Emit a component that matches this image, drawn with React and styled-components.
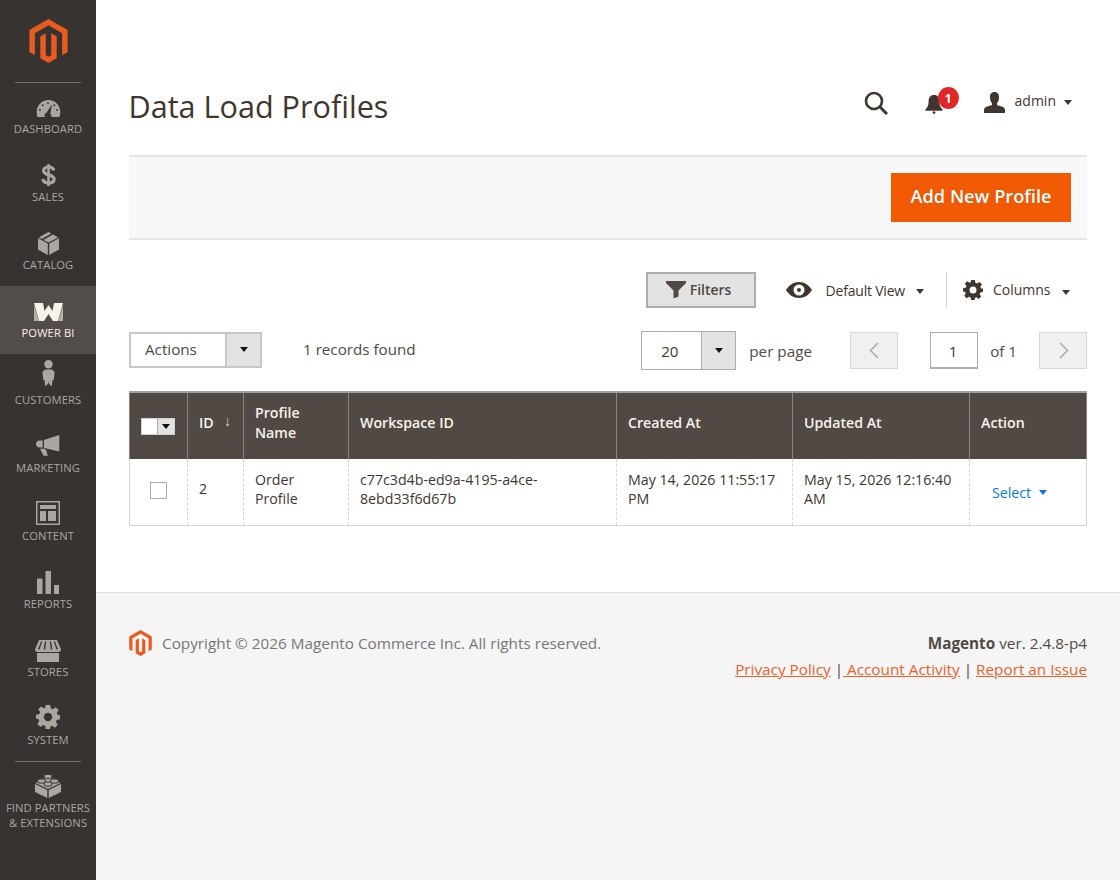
import React from "react";
import styled, { createGlobalStyle } from "styled-components";

const Global = createGlobalStyle`
  html, body { margin: 0; padding: 0; background: #fff; }
  body { font-family: "Open Sans", "Noto Sans", sans-serif; color: #41362f; }
  * { box-sizing: border-box; }
`;

const Shell = styled.div`display: flex; width: 1120px; height: 880px; overflow: hidden;`;
const Sidebar = styled.nav`width: 96px; flex: none; background: #373330; display: flex; flex-direction: column; align-items: stretch;`;
const LogoBox = styled.div`height: 83px; margin: 0 15px; padding-top: 19px; border-bottom: 1px solid #736e6a; display: flex; justify-content: center; align-items: flex-start;`;
const MenuList = styled.div`display: flex; flex-direction: column; margin-top: -0.6px;`;
const MenuItem = styled.a`
  height: 67.9px; flex: none; display: flex; flex-direction: column; align-items: center; justify-content: flex-end; padding-bottom: 14.4px;
  font-size: 11.2px; line-height: 15px; letter-spacing: 0.1px; text-transform: uppercase; text-align: center;
  color: ${p => p.$active ? "#f7f3eb" : "#aaa6a0"};
  background: ${p => p.$active ? "#524d49" : "transparent"};
`;
const IconSlot = styled.div`
  height: 28px; flex: none; display: flex; align-items: flex-end; justify-content: center;
  margin-bottom: ${p => 2 + (p.$lift || 0)}px; color: ${p => p.$active ? "#f7f3eb" : "#aaa6a0"};
`;
const PartnerItem = styled(MenuItem)`
  height: 110px; margin: 0 15px; border-top: 1px solid #736e6a; justify-content: flex-start; padding: 7.5px 0 0;
  white-space: nowrap;
`;
const Body = styled.div`flex: 1; display: flex; flex-direction: column; min-width: 0;`;
const Content = styled.main`padding: 0 33px; height: 592px; flex: none;`;
const Header = styled.header`height: 155px; padding-top: 85px; display: flex; justify-content: space-between; align-items: flex-start;`;
const Title = styled.h1`margin: -1px 0 0 -0.5px; font-size: 30.6px; line-height: 44px; font-weight: 400; color: #41362f;`;
const HeaderActions = styled.div`display: flex; align-items: center; height: 34px; margin-right: 15px;`;
const SearchWrap = styled.div`display: flex; margin-right: 37px; margin-top: 2px;`;
const BellWrap = styled.div`position: relative; display: flex; margin-right: 41px; margin-top: 4px;`;
const Badge = styled.span`
  position: absolute; top: -7px; left: 13px; width: 21px; height: 22px; border-radius: 50%; background: #e22626; color: #fff;
  font-size: 12px; font-weight: 700; display: flex; align-items: center; justify-content: center;
`;
const UserName = styled.span`font-size: 14px; color: #41362f; margin: -4px 8px 0 10px;`;
const Caret = styled.span`
  display: inline-block; width: 0; height: 0; border-left: 4.5px solid transparent; border-right: 4.5px solid transparent;
  border-top: 5px solid ${p => p.$color || "#41362f"};
  margin-top: ${p => p.$drop || 0}px;
`;
const ActionBar = styled.section`height: 85px; background: #f8f8f8; border-top: 2px solid #e6e6e6; border-bottom: 2px solid #e6e6e6; display: flex; justify-content: flex-end; align-items: center; padding-right: 16px;`;
const PrimaryButton = styled.button`
  width: 180px; height: 49px; border: 0; padding: 0 0 3px; background: #f15a03; color: #fff; font: 600 18.2px "Open Sans", sans-serif; text-shadow: 0 0 1px rgba(0,0,0,.25);
`;
const ToolRow = styled.div`height: 36px; margin-top: 32px; display: flex; justify-content: flex-end; align-items: center;`;
const FilterButton = styled.button`
  width: 110px; height: 36px; background: #e3e3e3; border: 2px solid #adadad; color: #514943; font: 600 14px "Open Sans", sans-serif;
  display: flex; align-items: center; justify-content: center; gap: 4px; padding: 0 4px 2px 0;
`;
const ViewSwitch = styled.div`display: flex; align-items: center; font-size: 14px; letter-spacing: -0.2px; color: #41362f; margin-left: 30px; padding-right: 22px;`;
const ViewLabel = styled.span`margin: 0 11px 0 14px;`;
const ColumnSwitch = styled.div`
  display: flex; align-items: center; font-size: 14px; color: #41362f; border-left: 1px solid #d6d6d6; height: 36px; padding-left: 16px; width: 141px;
`;
const ColumnLabel = styled.span`margin: -1px 12px 0 10px; letter-spacing: -0.02px;`;
const PagerRow = styled.div`height: 39px; margin-top: 23px; display: flex; align-items: center; justify-content: space-between; font-size: 15.2px;`;
const Group = styled.div`display: flex; align-items: center;`;
const ActionsSelect = styled.div`
  width: 133px; height: 36px; margin-top: -2px; border: 2px solid #c7c7c7; display: flex; background: #fff; color: #514943;
`;
const SelectText = styled.span`flex: 1; padding-left: 14px; line-height: 31px; font-size: 15.2px;`;
const SelectArrow = styled.span`width: 35px; background: #e3e3e3; border-left: 2px solid #c7c7c7; display: flex; align-items: center; justify-content: center;`;
const Found = styled.span`margin: -4px 0 0 41px; color: #514943;`;
const PageSelect = styled.div`width: 95px; height: 39px; border: 1px solid #adadad; display: flex; background: #fff;`;
const PageValue = styled.span`width: 59px; line-height: 39px; padding-left: 19px; font-size: 15.2px; color: #41362f;`;
const PageArrow = styled.span`flex: 1; background: #e3e3e3; border-left: 1px solid #adadad; display: flex; align-items: center; justify-content: center;`;
const PerPage = styled.span`margin: 0 38px 0 13px; color: #514943; font-size: 15.3px;`;
const PagerButton = styled.span`
  width: 48px; height: 37px; background: #f0f0f0; border: 1px solid #d8d8d8; display: flex; align-items: center; justify-content: center; color: #aaa;
`;
const PageInput = styled.span`
  width: 48px; height: 37px; margin-left: 32px; padding-right: 2px; border: 1px solid #adadad; border-width: 1px 1px 2px 1px; background: #fff; text-align: center; line-height: 37px; color: #41362f;
`;
const OfLabel = styled.span`margin: 0 22px 0 12px; color: #514943;`;
const Grid = styled.table`
  width: 957px; margin-top: 21px; border-collapse: collapse; table-layout: fixed; font-size: 14.2px;
`;
const Th = styled.th`
  height: 67px; background: #514943; color: #f7f3eb; text-align: left; font-weight: 600; line-height: 20px; padding: 0 11px 6px;
  border: 1px solid #8a837f; border-top: 2px solid #a5a09b; border-bottom: 0; position: relative;
`;
const Td = styled.td`
  height: 66px; padding: 0 11px; color: #41362f; line-height: 19px; border: 1px dashed #d6d6d6; border-bottom: 1px solid #d6d6d6; border-top: 0;
  &:first-child { border-left: 1px solid #d6d6d6; }
  &:last-child { border-right: 1px solid #d6d6d6; }
`;
const SortMark = styled.span`position: absolute; top: 18px; left: 36px; font-size: 14px; font-weight: 400; color: #d8d4cf;`;
const MassSelect = styled.div`width: 34px; height: 17px; display: flex; margin: 6px 0 0; border: 1px solid #d0d0d0; background: #fff;`;
const MassBox = styled.span`flex: 1; background: #fff;`;
const MassArrow = styled.span`width: 17px; background: #e3e3e3; border-left: 1px solid #aaa; display: flex; align-items: center; justify-content: center;`;
const Check = styled.div`width: 17px; height: 17px; border: 1px solid #adadad; background: #fff; margin: -3px 0 0 9px;`;
const CellWithOffset = styled.div`margin-top: ${p => p.$up || -5}px;`;
const SelectLink = styled.a`color: #007bdb; display: flex; align-items: center; gap: 8px; padding-left: 11px; margin-top: 2px;`;
const Footer = styled.footer`flex: 1; background: #f5f5f5; border-top: 1px solid #e3e3e3; padding: 37px 33px 0; display: flex; justify-content: space-between; align-items: flex-start; font-size: 15.3px; color: #777;`;
const Copy = styled.div`display: flex; align-items: center; gap: 10px; line-height: 26px;`;
const Legal = styled.div`text-align: right; line-height: 26px;`;
const Version = styled.div`color: #514943; strong { font-weight: 700; color: #514943; }`;
const FootLinks = styled.div`color: #514943;`;
const FootLink = styled.a`color: #e9622a; text-decoration: underline;`;

const MagentoLogo = ({ w, h }) => (
  <svg width={w} height={h} viewBox="0 0 43.400 50" fill="#eb5a1f">
    <path d="M21.700 0 43.400 12.500V37.500L37.200 41.100V16.100L21.700 7.200 6.200 16.100V41.100L0 37.500V12.500Z" />
    <path d="M21.700 50 12.400 44.600V19.700L18.600 16.100V41L21.700 42.900 24.800 41V16.100L31 19.700V44.600Z" />
  </svg>
);

const Gauge = () => (
  <svg width="25" height="19" viewBox="0 0 26 20" fill="currentColor">
    <path fillRule="evenodd" d="M13 1C6 1 .6 6.500.6 13.500c0 2.200.3 4 .9 5.500h7.700c-.4-.7-.5-1.400-.4-2.100.3-1.300 1.200-2.200 2.300-2.600L16.700 5.600l-1.800 9.600c.9.8 1.400 2 1.100 3.100l-.2.7h8.700c.6-1.500.9-3.300.9-5.500C25.400 6.500 20 1 13 1ZM4 12.500a1 1 0 1 1 0-2 1 1 0 0 1 0 2Zm3-5a1 1 0 1 1 0-2 1 1 0 0 1 0 2Zm5.500-2a1 1 0 1 1 0-2 1 1 0 0 1 0 2Zm9.500 7a1 1 0 1 1 0-2 1 1 0 0 1 0 2Zm-2.800-5a1 1 0 1 1 0-2 1 1 0 0 1 0 2Z" />
  </svg>
);
const Dollar = () => (
  <svg width="15" height="24" viewBox="0 0 15 24" fill="none" stroke="currentColor">
    <path d="M7.500 1V23" strokeWidth="2.600" />
    <path d="M12.800 7.300C12.300 5 10.300 4 7.700 4 4.700 4 2.600 5.400 2.600 7.700c0 5.300 10.500 3 10.500 8.600 0 2.400-2.300 3.700-5.400 3.700-3 0-5.400-1.200-5.800-3.900" strokeWidth="3.200" />
  </svg>
);
const Box = () => (
  <svg width="21" height="23" viewBox="0 0 21 23" fill="currentColor">
    <path d="M0 6.300 9.800 11.600V23L0 17.500ZM21 6.300V17.500L11.200 23V11.600ZM10.500 0 13.400 1.600 3.700 7 .8 5.400ZM15 2.500 20.200 5.400 10.500 10.600 5.300 7.900Z" />
  </svg>
);
const PowerBi = () => (
  <svg width="29" height="18" viewBox="0 0 29 18" fill="currentColor">
    <path d="M0 0H9L10.500 8 14.500 2 18.500 8 20 0H29L24 18H19L14.500 11 10 18H5Z" />
    <path d="M0 2 4.700 18H0ZM29 2V18H24.300Z" opacity=".6" />
  </svg>
);
const Person = () => (
  <svg width="13" height="27" viewBox="0 0 13 27" fill="currentColor">
    <circle cx="6.500" cy="4.300" r="4.200" />
    <path d="M3 9.500H10L12.600 12 11.700 20H10.500L9.800 26.500 6.900 23.500 6.500 21 6.100 23.500 3.200 26.500 2.500 20H1.300L.4 12Z" />
  </svg>
);
const Megaphone = () => (
  <svg width="24" height="21" viewBox="0 0 24 21" fill="currentColor">
    <path d="M23.300 0V16.400L8 13V5ZM6.700 5.600V12.600H3.400C1.500 12.600 0 11 0 9.100 0 7.200 1.500 5.600 3.400 5.600ZM4 13.800H8.300L10.200 15 11.800 20.800H7.500Z" />
  </svg>
);
const Layout = () => (
  <svg width="24" height="24" viewBox="0 0 24 24" fill="currentColor">
    <path fillRule="evenodd" d="M0 0H24V24H0ZM1.500 1.500V22.500H22.500V1.500ZM4 4H20V8H4ZM4 10H10V20H4ZM12 10H20V20H12Z" />
  </svg>
);
const Bars = () => (
  <svg width="22" height="23" viewBox="0 0 22 23" fill="currentColor">
    <path d="M0 7.500H5.500V23H0ZM8.500 0H14V23H8.500ZM17 14H22V23H17Z" />
  </svg>
);
const Store = () => (
  <svg width="26" height="22" viewBox="0 0 26 22" fill="currentColor">
    <path fillRule="evenodd" d="M4 0H22L26 9.500C25.800 11.300 24.600 12 23.600 12H2.400C1.400 12 .2 11.300 0 9.500ZM6 1.500 3 9.500H4.500L7.300 1.500ZM10 1.500 8.700 9.500H10.200L11.300 1.500ZM14.700 1.500 15.800 9.500H17.300L16 1.500ZM18.700 1.500 21.500 9.500H23L20 1.500Z" />
    <path d="M2 13H24V22H2Z" />
  </svg>
);
const Gear = ({ size = 24 }) => (
  <svg width={size} height={size} viewBox="0 0 24 24" fill="currentColor">
    <path fillRule="evenodd" d="M9.800 0H14.200L14.900 3.300 17 4.200 19.800 2.300 22.700 5.200 20.800 8 21.700 10.100 24 10.200V14.200L20.800 14.900 19.900 17 21.800 19.800 18.900 22.700 16.100 20.800 14.400 21.700 14 24H9.800L9.200 20.900 7.100 20 4.300 21.900 1.400 19 3.300 16.200 2.400 14.100 0 13.800V9.800L3.200 9.200 4.100 7.100 2.200 4.300 5.100 1.400 7.900 3.300 9.300 2.500ZM12 7.800A4.200 4.200 0 1 0 12 16.200 4.200 4.200 0 0 0 12 7.800Z" />
  </svg>
);
const Lego = () => (
  <svg width="26" height="25" viewBox="0 0 26 25" fill="currentColor">
    <path d="M13 4 25.500 10 13 16 .5 10Z" />
    <path d="M0 11 12.300 17V25L0 19ZM26 11V19L13.700 25V17Z" />
    <g stroke="#373330" strokeWidth="1">
      <path d="M9.200 2.500C9.200 1.100 16.800 1.100 16.800 2.500V4.500C16.800 6 9.200 6 9.200 4.500Z" />
      <path d="M2.700 7C2.700 5.600 10.300 5.600 10.300 7V9C10.300 10.500 2.700 10.500 2.700 9Z" />
      <path d="M15.700 7C15.700 5.600 23.300 5.600 23.300 7V9C23.300 10.500 15.700 10.500 15.700 9Z" />
      <path d="M9.200 10C9.200 8.600 16.800 8.600 16.800 10V12C16.800 13.500 9.200 13.500 9.200 12Z" />
    </g>
  </svg>
);

const items = [
  ["Dashboard", <Gauge />, 1], ["Sales", <Dollar />, 0], ["Catalog", <Box />, 0], ["Power BI", <PowerBi />, 2, true],
  ["Customers", <Person />, 3], ["Marketing", <Megaphone />, 2], ["Content", <Layout />, 1], ["Reports", <Bars />, 0],
  ["Stores", <Store />, 0], ["System", <Gear />, 1],
];

const SearchIcon = () => (
  <svg width="24" height="24" viewBox="0 0 24 24" fill="none" stroke="#41362f" strokeWidth="2.600">
    <circle cx="10" cy="10" r="8" /><path d="M16 16 23 23" strokeWidth="3" />
  </svg>
);
const Bell = () => (
  <svg width="18" height="20" viewBox="0 0 20 22" fill="#41362f">
    <path d="M10 1C6 1 4 4 4 8c0 5-1.500 7-3.500 9v1.500h19V17C17.500 15 16 13 16 8c0-4-2-7-6-7Z" /><circle cx="10" cy="20.500" r="1.500" />
  </svg>
);
const User = () => (
  <svg width="21" height="21" viewBox="0 0 21 21" fill="#41362f">
    <path d="M10.500 0C14 0 15.300 2.500 15 6c-.2 2.500-1 4-2 5.200v1.800c3 1.100 7.500 1.600 8 4.500V21H0v-3.500c.5-2.900 5-3.400 8-4.500v-1.800C7 10 6.200 8.500 6 6 5.700 2.500 7 0 10.500 0Z" />
  </svg>
);
const Funnel = () => (
  <svg width="20" height="19" viewBox="0 0 20 19" fill="#514943"><path d="M0 1H20V3L12.500 10.500V16.500L7.500 18.500V10.500L0 3Z" /></svg>
);
const Eye = () => (
  <svg width="26" height="16" viewBox="0 0 26 16" fill="#41362f">
    <path fillRule="evenodd" d="M13 0C7.500 0 3 3 0 8c3 5 7.500 8 13 8s10-3 13-8c-3-5-7.500-8-13-8Zm0 2.500a5.500 5.500 0 1 1 0 11 5.500 5.500 0 0 1 0-11ZM13 6a2 2 0 1 0 0 4 2 2 0 0 0 0-4Z" />
  </svg>
);
const Chevron = ({ right }) => (
  <svg width="11" height="17" viewBox="0 0 11 17" fill="none" stroke="#aaa" strokeWidth="1.500">
    <path d={right ? "M2 1 9.500 8.500 2 16" : "M9 1 1.500 8.500 9 16"} />
  </svg>
);

const columns = [
  ["", 58], ["ID", 56], ["Profile Name", 105], ["Workspace ID", 268], ["Created At", 176], ["Updated At", 177], ["Action", 117],
];

export default function App() {
  return (
    <Shell>
      <Global />
      <Sidebar>
        <LogoBox><MagentoLogo w={39} h={44} /></LogoBox>
        <MenuList>
          {items.map(([label, icon, lift, active]) => (
            <MenuItem key={label} $active={active}>
              <IconSlot $active={active} $lift={lift}>{icon}</IconSlot>
              {label}
            </MenuItem>
          ))}
          <PartnerItem>
            <IconSlot><Lego /></IconSlot>
            Find Partners<br />&amp; Extensions
          </PartnerItem>
        </MenuList>
      </Sidebar>
      <Body>
        <Content>
          <Header>
            <Title>Data Load Profiles</Title>
            <HeaderActions>
              <SearchWrap><SearchIcon /></SearchWrap>
              <BellWrap><Bell /><Badge>1</Badge></BellWrap>
              <User />
              <UserName>admin</UserName>
              <Caret />
            </HeaderActions>
          </Header>
          <ActionBar><PrimaryButton>Add New Profile</PrimaryButton></ActionBar>
          <ToolRow>
            <FilterButton><Funnel />Filters</FilterButton>
            <ViewSwitch><Eye /><ViewLabel>Default View</ViewLabel><Caret $drop={2} /></ViewSwitch>
            <ColumnSwitch><Gear size={20} /><ColumnLabel>Columns</ColumnLabel><Caret $drop={4} /></ColumnSwitch>
          </ToolRow>
          <PagerRow>
            <Group>
              <ActionsSelect>
                <SelectText>Actions</SelectText>
                <SelectArrow><Caret $color="#111" /></SelectArrow>
              </ActionsSelect>
              <Found>1 records found</Found>
            </Group>
            <Group>
              <PageSelect>
                <PageValue>20</PageValue>
                <PageArrow><Caret $color="#111" /></PageArrow>
              </PageSelect>
              <PerPage>per page</PerPage>
              <PagerButton><Chevron /></PagerButton>
              <PageInput>1</PageInput>
              <OfLabel>of 1</OfLabel>
              <PagerButton><Chevron right /></PagerButton>
            </Group>
          </PagerRow>
          <Grid>
            <colgroup>{columns.map(([n, w]) => <col key={n} width={w} />)}</colgroup>
            <thead>
              <tr>
                <Th><MassSelect><MassBox /><MassArrow><Caret $color="#111" /></MassArrow></MassSelect></Th>
                <Th>ID<SortMark>↓</SortMark></Th>
                <Th>Profile Name</Th>
                <Th>Workspace ID</Th>
                <Th>Created At</Th>
                <Th>Updated At</Th>
                <Th>Action</Th>
              </tr>
            </thead>
            <tbody>
              <tr>
                <Td><Check /></Td>
                <Td><CellWithOffset $up={-7}>2</CellWithOffset></Td>
                <Td><CellWithOffset>Order Profile</CellWithOffset></Td>
                <Td><CellWithOffset>c77c3d4b-ed9a-4195-a4ce-8ebd33f6d67b</CellWithOffset></Td>
                <Td><CellWithOffset>May 14, 2026 11:55:17 PM</CellWithOffset></Td>
                <Td><CellWithOffset>May 15, 2026 12:16:40 AM</CellWithOffset></Td>
                <Td><SelectLink>Select <Caret $color="#007bdb" /></SelectLink></Td>
              </tr>
            </tbody>
          </Grid>
        </Content>
        <Footer>
          <Copy><MagentoLogo w={23} h={26} />Copyright © 2026 Magento Commerce Inc. All rights reserved.</Copy>
          <Legal>
            <Version><strong>Magento</strong> ver. 2.4.8-p4</Version>
            <FootLinks>
              <FootLink>Privacy Policy</FootLink> |<FootLink>&nbsp;Account Activity</FootLink> | <FootLink>Report an Issue</FootLink>
            </FootLinks>
          </Legal>
        </Footer>
      </Body>
    </Shell>
  );
}
